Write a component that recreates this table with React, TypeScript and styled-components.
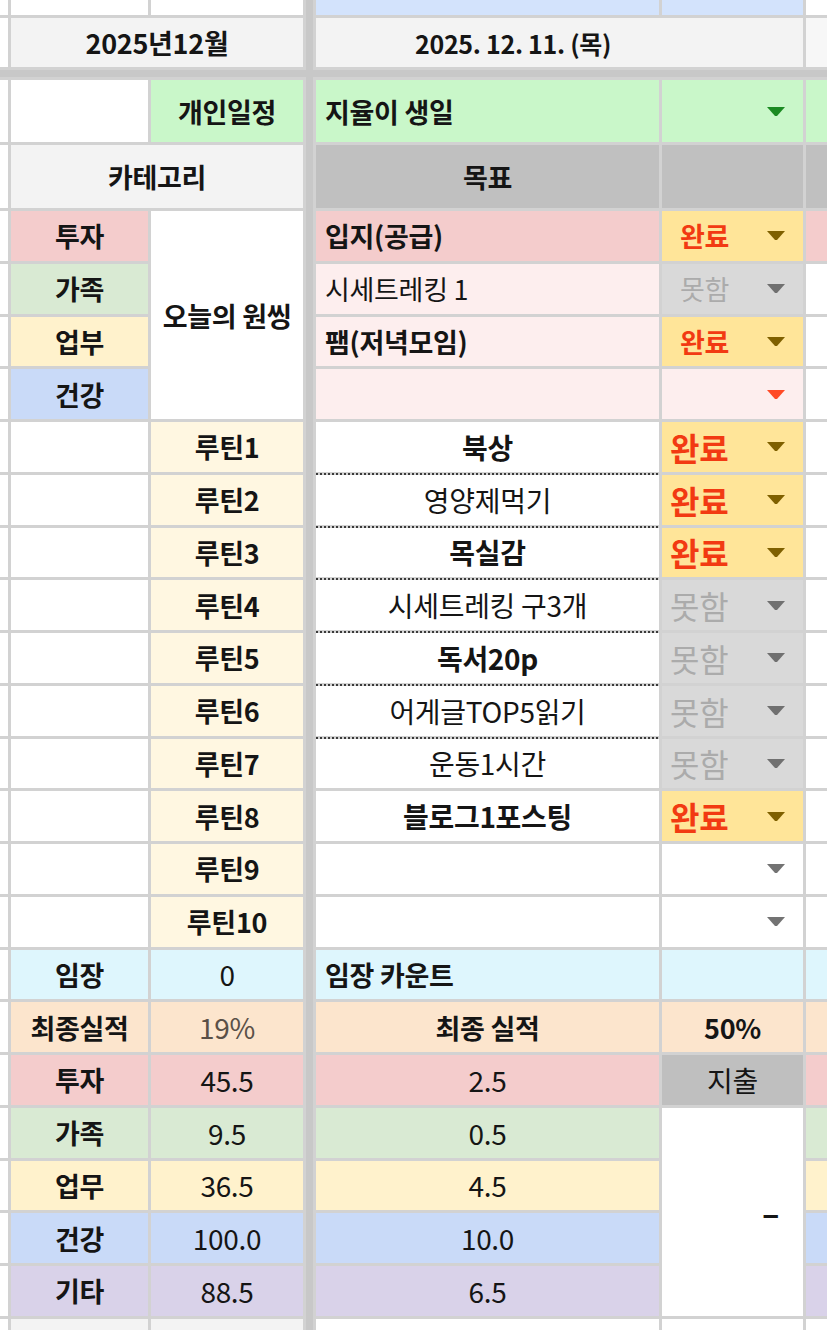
import styled, { createGlobalStyle } from "styled-components";

const GlobalStyle = createGlobalStyle`
  html, body {
    margin: 0;
    padding: 0;
    background: #fff;
  }
  body {
    font-family: "Noto Sans CJK KR", "Noto Sans", sans-serif;
  }
`;

const Sheet = styled.div`
  display: grid;
  width: 827px;
  height: 1330px;
  overflow: hidden;
  grid-template-columns: 8px 137px 152px 7px 343px 141px 1fr;
  grid-template-rows: 15px 49px 7px 62px 63px repeat(21, 49.75px) 40px;
  gap: 3px;
  background: #d2d2d2;
`;

type Pos = {
  $c: number;
  $r: number;
  $cs?: number;
  $rs?: number;
  $bg?: string;
};

const Cell = styled.div<Pos>`
  grid-column: ${(p) => p.$c} / span ${(p) => p.$cs ?? 1};
  grid-row: ${(p) => p.$r} / span ${(p) => p.$rs ?? 1};
  background: ${(p) => p.$bg ?? "#fff"};
  display: flex;
  align-items: center;
  justify-content: center;
  font-size: 27px;
  letter-spacing: -0.3px;
  color: #151515;
  white-space: nowrap;
  overflow: hidden;
  position: relative;
`;

const Divider = styled(Cell)`
  background: #c8c8c8;
`;

const Label = styled(Cell)`
  font-weight: 700;
`;

const Value = styled(Cell)<{ $muted?: boolean }>`
  font-weight: 400;
  font-size: 28px;
  color: ${(p) => (p.$muted ? "#5a5048" : "#151515")};
`;

const DateCell = styled(Cell)`
  justify-content: flex-start;
  padding-left: 99px;
  font-size: 25px;
  font-weight: 700;
`;

const Goal = styled(Cell)<{ $bold?: boolean }>`
  justify-content: flex-start;
  padding-left: 9px;
  font-weight: ${(p) => (p.$bold ? 700 : 400)};
`;

const RoutineGoal = styled(Cell)<{ $bold?: boolean; $dotted?: boolean }>`
  overflow: visible;
  font-size: 28px;
  font-weight: ${(p) => (p.$bold ? 700 : 400)};
  &::after {
    content: "";
    display: ${(p) => (p.$dotted ? "block" : "none")};
    position: absolute;
    left: 0;
    right: 0;
    bottom: -3px;
    height: 2px;
    background-image: repeating-linear-gradient(
      to right,
      #3a3a3a 0 2px,
      transparent 2px 4px
    );
    z-index: 1;
  }
`;

type State = "done" | "not" | "empty";

const statusBg: Record<State, string> = {
  done: "#ffe599",
  not: "#d9d9d9",
  empty: "#fff",
};

const Status = styled(Cell)<{ $state: State; $big?: boolean }>`
  justify-content: space-between;
  padding: 0 18px 0 ${(p) => (p.$big ? 8 : 18)}px;
  font-size: ${(p) => (p.$big ? 32 : 27)}px;
  font-weight: ${(p) => (p.$state === "done" ? 700 : 400)};
  color: ${(p) => (p.$state === "done" ? "#f23a12" : "#ababab")};
`;

const Dash = styled(Cell)`
  justify-content: flex-end;
  padding-right: 24px;
  font-size: 32px;
  font-weight: 700;
`;

function Arrow({ color }: { color: string }) {
  return (
    <svg width="18" height="9" viewBox="0 0 18 9">
      <polygon points="0,0 18,0 10,9 8,9" fill={color} />
    </svg>
  );
}

const arrowColor: Record<State, string> = {
  done: "#7f6000",
  not: "#707070",
  empty: "#737373",
};

const topCats = [
  { label: "투자", bg: "#f4cccc", goal: "입지(공급)", goalBg: "#f4cccc", bold: true, state: "done" as State, eBg: "#f4cccc" },
  { label: "가족", bg: "#d9ead3", goal: "시세트레킹 1", goalBg: "#fdeeee", bold: false, state: "not" as State, eBg: "#fff" },
  { label: "업부", bg: "#fff2cc", goal: "팸(저녁모임)", goalBg: "#fdeeee", bold: true, state: "done" as State, eBg: "#fff" },
  { label: "건강", bg: "#c9daf8", goal: "", goalBg: "#fdeeee", bold: false, state: "empty" as State, eBg: "#fff" },
];

const routines: { text: string; bold: boolean; state: State }[] = [
  { text: "북상", bold: true, state: "done" },
  { text: "영양제먹기", bold: false, state: "done" },
  { text: "목실감", bold: true, state: "done" },
  { text: "시세트레킹 구3개", bold: false, state: "not" },
  { text: "독서20p", bold: true, state: "not" },
  { text: "어게글TOP5읽기", bold: false, state: "not" },
  { text: "운동1시간", bold: false, state: "not" },
  { text: "블로그1포스팅", bold: true, state: "done" },
  { text: "", bold: false, state: "empty" },
  { text: "", bold: false, state: "empty" },
];

const totals = [
  { label: "투자", sum: "45.5", today: "2.5", bg: "#f4cccc" },
  { label: "가족", sum: "9.5", today: "0.5", bg: "#d9ead3" },
  { label: "업무", sum: "36.5", today: "4.5", bg: "#fff2cc" },
  { label: "건강", sum: "100.0", today: "10.0", bg: "#c9daf8" },
  { label: "기타", sum: "88.5", today: "6.5", bg: "#d9d2e9" },
];

const LIGHT = "#f3f3f3";
const SKY = "#d3e3fc";
const GREEN = "#c9f7c9";
const GRAY = "#c0c0c0";
const CYAN = "#def6fd";
const PEACH = "#fce5cd";
const ROUTINE = "#fff7e1";

export default function App() {
  const first = 6;
  const routineStart = first + topCats.length;
  const after = routineStart + routines.length;
  const totalsStart = after + 2;
  const last = totalsStart + totals.length;

  return (
    <>
      <GlobalStyle />
      <Sheet>
        <Divider $c={4} $r={1} $rs={27} />
        <Divider $c={1} $r={3} $cs={7} />

        {/* top partial row */}
        <Cell $c={1} $r={1} />
        <Cell $c={2} $r={1} />
        <Cell $c={3} $r={1} />
        <Cell $c={5} $r={1} $bg={SKY} />
        <Cell $c={6} $r={1} $bg={SKY} />
        <Cell $c={7} $r={1} />

        {/* month / date */}
        <Cell $c={1} $r={2} />
        <Label $c={2} $r={2} $cs={2} $bg={LIGHT}>2025년12월</Label>
        <DateCell $c={5} $r={2} $cs={2} $bg={LIGHT}>2025. 12. 11. (목)</DateCell>
        <Cell $c={7} $r={2} $bg="#f7f7f7" />

        {/* personal schedule */}
        <Cell $c={1} $r={4} />
        <Cell $c={2} $r={4} />
        <Label $c={3} $r={4} $bg={GREEN}>개인일정</Label>
        <Goal $c={5} $r={4} $bg={GREEN} $bold>지율이 생일</Goal>
        <Status $c={6} $r={4} $bg={GREEN} $state="empty">
          <span />
          <Arrow color="#1b8a22" />
        </Status>
        <Cell $c={7} $r={4} $bg={GREEN} />

        {/* headers */}
        <Cell $c={1} $r={5} />
        <Label $c={2} $r={5} $cs={2} $bg={LIGHT}>카테고리</Label>
        <Label $c={5} $r={5} $bg={GRAY}>목표</Label>
        <Cell $c={6} $r={5} $bg={GRAY} />
        <Cell $c={7} $r={5} $bg={GRAY} />

        {/* one thing */}
        <Label $c={3} $r={first} $rs={topCats.length}>오늘의 원씽</Label>
        {topCats.map((t, i) => (
          <>
            <Cell key={`a${i}`} $c={1} $r={first + i} />
            <Label key={`l${i}`} $c={2} $r={first + i} $bg={t.bg}>{t.label}</Label>
            <Goal key={`g${i}`} $c={5} $r={first + i} $bg={t.goalBg} $bold={t.bold}>{t.goal}</Goal>
            <Status
              key={`s${i}`}
              $c={6}
              $r={first + i}
              $state={t.state}
              $bg={t.state === "empty" ? "#fdeeee" : statusBg[t.state]}
            >
              <span>{t.state === "done" ? "완료" : t.state === "not" ? "못함" : ""}</span>
              <Arrow color={t.state === "empty" ? "#ff4a26" : arrowColor[t.state]} />
            </Status>
            <Cell key={`e${i}`} $c={7} $r={first + i} $bg={t.eBg} />
          </>
        ))}

        {/* routines */}
        {routines.map((r, i) => (
          <>
            <Cell key={`ra${i}`} $c={1} $r={routineStart + i} />
            <Cell key={`rb${i}`} $c={2} $r={routineStart + i} />
            <Label key={`rl${i}`} $c={3} $r={routineStart + i} $bg={ROUTINE}>루틴{i + 1}</Label>
            <RoutineGoal key={`rg${i}`} $c={5} $r={routineStart + i} $bold={r.bold} $dotted={i < 6}>
              {r.text}
            </RoutineGoal>
            <Status key={`rs${i}`} $c={6} $r={routineStart + i} $state={r.state} $bg={statusBg[r.state]} $big>
              <span>{r.state === "done" ? "완료" : r.state === "not" ? "못함" : ""}</span>
              <Arrow color={arrowColor[r.state]} />
            </Status>
            <Cell key={`re${i}`} $c={7} $r={routineStart + i} />
          </>
        ))}

        {/* field visits */}
        <Cell $c={1} $r={after} />
        <Label $c={2} $r={after} $bg={CYAN}>임장</Label>
        <Value $c={3} $r={after} $bg={CYAN}>0</Value>
        <Goal $c={5} $r={after} $bg={CYAN} $bold>임장 카운트</Goal>
        <Cell $c={6} $r={after} $bg={CYAN} />
        <Cell $c={7} $r={after} $bg={CYAN} />

        {/* final score */}
        <Cell $c={1} $r={after + 1} />
        <Label $c={2} $r={after + 1} $bg={PEACH}>최종실적</Label>
        <Value $c={3} $r={after + 1} $bg={PEACH} $muted>19%</Value>
        <Label $c={5} $r={after + 1} $bg={PEACH}>최종 실적</Label>
        <Label $c={6} $r={after + 1} $bg={PEACH}>50%</Label>
        <Cell $c={7} $r={after + 1} $bg={PEACH} />

        {/* totals */}
        <Value $c={6} $r={totalsStart} $bg="#bfbfbf">지출</Value>
        <Dash $c={6} $r={totalsStart + 1} $rs={totals.length - 1}>–</Dash>
        {totals.map((t, i) => (
          <>
            <Cell key={`ta${i}`} $c={1} $r={totalsStart + i} />
            <Label key={`tl${i}`} $c={2} $r={totalsStart + i} $bg={t.bg}>{t.label}</Label>
            <Value key={`ts${i}`} $c={3} $r={totalsStart + i} $bg={t.bg}>{t.sum}</Value>
            <Value key={`tt${i}`} $c={5} $r={totalsStart + i} $bg={t.bg}>{t.today}</Value>
            <Cell key={`te${i}`} $c={7} $r={totalsStart + i} $bg={t.bg} />
          </>
        ))}

        {/* next partial row */}
        <Cell $c={1} $r={last} />
        <Cell $c={2} $r={last} $bg={LIGHT} />
        <Cell $c={3} $r={last} $bg={LIGHT} />
        <Cell $c={5} $r={last} />
        <Cell $c={6} $r={last} />
        <Cell $c={7} $r={last} />
      </Sheet>
    </>
  );
}
